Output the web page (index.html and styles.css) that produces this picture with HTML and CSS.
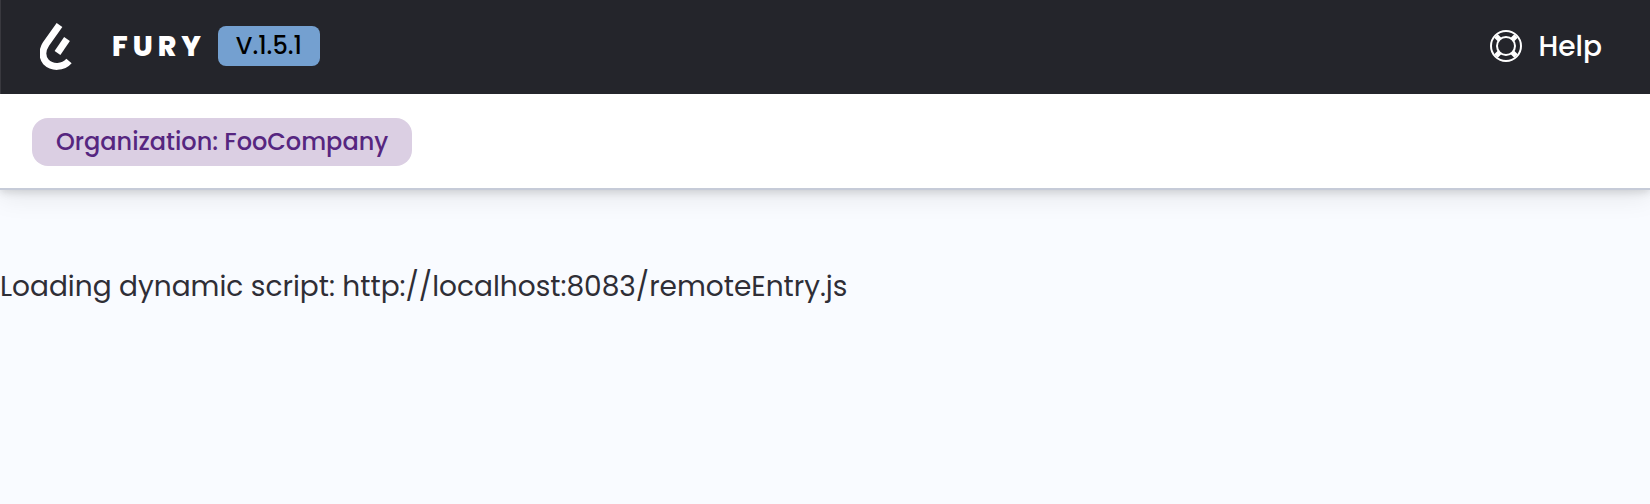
FILE: index.html
```html
<!DOCTYPE html>
<html lang="en">
<head>
<meta charset="utf-8">
<title>Fury</title>
<link rel="stylesheet" href="styles.css">
</head>
<body>
<header class="topbar">
  <a class="brand" href="#">
    <svg class="logo" viewBox="0 0 34 50" fill="none" stroke="#fff" stroke-width="7" aria-hidden="true">
      <path d="M19.500 4 6 23C2 29 2 36 6 41C12 47 23 47 29 40"/>
      <path d="M27 18 17.500 32"/>
    </svg>
    <span class="brand-name">FURY</span>
  </a>
  <span class="version">V.1.5.1</span>
  <button class="help" type="button">
    <svg class="help-icon" viewBox="0 0 32 32" fill="none" stroke="#fff" stroke-width="2" aria-hidden="true">
      <circle cx="16" cy="16" r="15"/>
      <circle cx="16" cy="16" r="9"/>
      <path stroke-width="5" d="m6 6 4 4m12 12 4 4m0-20-4 4M10 22l-4 4"/>
    </svg>
    <span class="help-label">Help</span>
  </button>
</header>
<nav class="subbar" aria-label="Organization">
  <span class="organization">Organization: FooCompany</span>
</nav>
<main class="content">
  <p class="status">Loading dynamic script: http://localhost:8083/remoteEntry.js</p>
</main>
</body>
</html>
```
FILE: styles.css
```css
body {
  margin: 0;
  background: #f9fbff;
  color: #2f2e36;
  font-family: Poppins, Inter, sans-serif;
}

.topbar {
  position: relative;
  z-index: 2;
  display: flex;
  align-items: center;
  min-height: 94px;
  padding: 0 48px 2px 39px;
  box-sizing: border-box;
  border-left: 1px solid #39393f;
  background: #24252b;
}

.brand {
  display: flex;
  align-items: center;
  gap: 38px;
  color: #fff;
  text-decoration: none;
}

.logo {
  width: 34px;
  height: 50px;
}

.brand-name,
.help-label {
  padding-top: 2px;
  font-size: 28px;
  line-height: 44px;
}

.brand-name {
  font-weight: 800;
  letter-spacing: 5px;
}

.version {
  margin-left: 12px;
  padding: 0 18px;
  border-radius: 8px;
  background: #74a0d0;
  color: #000;
  font-size: 24px;
  font-weight: 500;
  line-height: 40px;
}

.help {
  display: flex;
  align-items: center;
  gap: 17px;
  margin-left: auto;
  padding: 0;
  border: 0;
  background: none;
  color: #fff;
  font: inherit;
  font-weight: 500;
}

.help-icon {
  width: 32px;
  height: 32px;
}

.subbar {
  position: relative;
  z-index: 1;
  display: flex;
  padding: 24px 32px 22px;
  border-bottom: 2px solid #c6cbd8;
  background: #fff;
  box-shadow: 0 2px 8px rgba(0, 0, 0, 0.14), 0 8px 24px rgba(0, 0, 0, 0.08);
}

.organization {
  padding: 0 24px;
  border-radius: 16px;
  background: #dbcfe3;
  color: #562680;
  font-size: 24px;
  font-weight: 500;
  line-height: 48px;
}

.content {
  padding-top: 76px;
}

.status {
  margin: 0;
  font-size: 28px;
  line-height: 42px;
}
```
